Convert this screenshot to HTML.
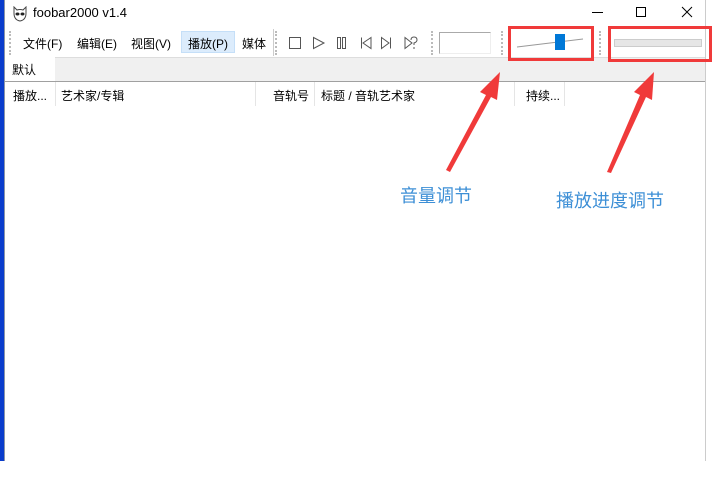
<!DOCTYPE html>
<html><head><meta charset="utf-8"><style>
*{margin:0;padding:0;box-sizing:border-box}
body{width:714px;height:479px;background:#fff;position:relative;overflow:hidden;font-family:"Liberation Sans","Noto Sans CJK SC",sans-serif;font-size:12px;color:#000}
.a{position:absolute}
.t{white-space:nowrap}
.grip{position:absolute;width:2px;border-left:2px dotted #bbb}
</style></head><body>
<div class="a" style="left:0;top:0;width:5px;height:461px;background:#0a3ccc"></div>
<div class="a" style="left:4px;top:0;width:1px;height:461px;background:#8a95a8"></div>
<div class="a" style="left:705px;top:0;width:1px;height:461px;background:#ccc"></div>
<!-- title -->
<svg class="a" style="left:12px;top:6px" width="16" height="16" viewBox="0 0 16 16"><path d="M2 1 L5 4 Q8 3 11 4 L14 1 L14 7 Q14 14 8 15 Q2 14 2 7Z" fill="#fff" stroke="#444"/><ellipse cx="5.5" cy="8" rx="2" ry="1.5" fill="#222"/><ellipse cx="10.5" cy="8" rx="2" ry="1.5" fill="#222"/></svg>
<div class="a t" style="left:33px;top:5px;font-size:13px">foobar2000 v1.4</div>
<div class="a" style="left:592px;top:12px;width:11px;height:1px;background:#000"></div>
<div class="a" style="left:636px;top:7px;width:10px;height:10px;border:1px solid #000"></div>
<svg class="a" style="left:681px;top:6px" width="12" height="12"><path d="M1 1L11 11M11 1L1 11" stroke="#000"/></svg>
<!-- toolbar -->
<div class="a" style="left:5px;top:28px;width:700px;height:29px;background:#fff"></div>
<div class="grip" style="left:9px;top:31px;height:24px"></div>
<div class="a" style="left:181px;top:31px;width:54px;height:22px;background:#dcecfc;border:1px solid #c5dff8"></div>
<div class="a t" style="left:23px;top:35px">文件(F)</div>
<div class="a t" style="left:77px;top:35px">编辑(E)</div>
<div class="a t" style="left:131px;top:35px">视图(V)</div>
<div class="a t" style="left:188px;top:35px">播放(P)</div>
<div class="a t" style="left:242px;top:35px">媒体</div>
<div class="a" style="left:273px;top:29px;width:1px;height:27px;background:#ccc"></div>
<div class="grip" style="left:275px;top:31px;height:24px"></div>
<svg class="a" style="left:285px;top:34px" width="140" height="18" fill="none" stroke="#555">
<rect x="4.5" y="3.5" width="11" height="11"/>
<path d="M28.5 3.5 L39 9 L28.5 14.5Z"/>
<rect x="52.5" y="3.5" width="3" height="11"/><rect x="57.5" y="3.5" width="3" height="11"/>
<path d="M76.5 3.5v11M86 3.5 L78 9 L86 14.5Z"/>
<path d="M96.5 3.5 L104 9 L96.5 14.5ZM105.5 3.5v11"/>
<path d="M120 3.5 L127 9 L120 14.5Z M126 6 q0-3 3-3 q3 0 3 3 q0 2-3 3v2M129 13v2"/>
</svg>
<div class="grip" style="left:431px;top:31px;height:24px"></div>
<div class="a" style="left:439px;top:32px;width:52px;height:22px;border:1px solid #aaa;border-right-color:#eee;border-bottom-color:#eee"></div>
<div class="grip" style="left:501px;top:31px;height:24px"></div>
<svg class="a" style="left:515px;top:32px" width="80" height="20"><path d="M2 15 L68 7" stroke="#999"/><rect x="40" y="2" width="10" height="16" fill="#0078d7"/></svg>
<div class="grip" style="left:599px;top:31px;height:24px"></div>
<div class="a" style="left:614px;top:39px;width:88px;height:8px;background:#e6e6e6;border:1px solid #ccc"></div>
<!-- tab row -->
<div class="a" style="left:5px;top:57px;width:700px;height:24px;background:#f0f0f0;border-top:1px solid #ddd"></div>
<div class="a" style="left:5px;top:57px;width:50px;height:24px;background:#fff"></div>
<div class="a t" style="left:12px;top:61px">默认</div>
<div class="a" style="left:5px;top:81px;width:700px;height:1px;background:#a0a0a0"></div>
<!-- red boxes -->
<div class="a" style="left:508px;top:26px;width:86px;height:35px;border:3px solid #f03a3a"></div>
<div class="a" style="left:608px;top:26px;width:104px;height:36px;border:3px solid #f03a3a"></div>
<!-- header -->
<div class="a t" style="left:13px;top:87px">播放...</div>
<div class="a t" style="left:61px;top:87px">艺术家/专辑</div>
<div class="a t" style="left:273px;top:87px">音轨号</div>
<div class="a t" style="left:321px;top:87px">标题 / 音轨艺术家</div>
<div class="a t" style="left:526px;top:87px">持续...</div>
<div class="a" style="left:55px;top:82px;width:1px;height:24px;background:#e5e5e5"></div>
<div class="a" style="left:255px;top:82px;width:1px;height:24px;background:#e5e5e5"></div>
<div class="a" style="left:314px;top:82px;width:1px;height:24px;background:#e5e5e5"></div>
<div class="a" style="left:514px;top:82px;width:1px;height:24px;background:#e5e5e5"></div>
<div class="a" style="left:564px;top:82px;width:1px;height:24px;background:#e5e5e5"></div>
<!-- arrows -->
<svg class="a" style="left:0;top:0" width="714" height="479">
<path d="M446 170 L486 95 L480 92 L500 72 L497 100 L491 97 L450 172Z" fill="#f03a3a"/>
<path d="M607 172 L640 95 L634 92 L654 72 L652 100 L646 97 L611 173Z" fill="#f03a3a"/>
</svg>
<div class="a t" style="left:400px;top:182px;font-size:18px;color:#3d8fd6">音量调节</div>
<div class="a t" style="left:556px;top:187px;font-size:18px;color:#3d8fd6">播放进度调节</div>
</body></html>
